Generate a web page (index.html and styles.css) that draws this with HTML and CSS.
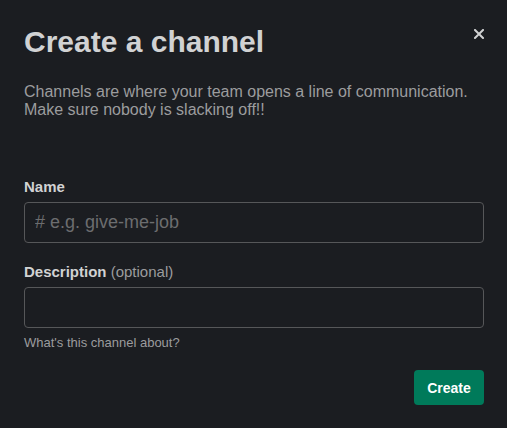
FILE: index.html
```html
<!DOCTYPE html>
<html lang="en">
<head>
<meta charset="utf-8">
<title>Create a channel</title>
<link rel="stylesheet" href="styles.css">
</head>
<body>
<div class="modal">
  <div class="header">
    <h1 class="title">Create a channel</h1>
    <button class="close" aria-label="Close">
      <svg width="10" height="10" viewBox="0 0 10 10"><path d="M1 1L9 9M9 1L1 9" stroke="#d1d2d3" stroke-width="2" stroke-linecap="square"/></svg>
    </button>
  </div>
  <p class="intro">Channels are where your team opens a line of communication.<br>Make sure nobody is slacking off!!</p>
  <form class="form">
    <label class="label" for="name">Name</label>
    <input class="field" id="name" type="text" placeholder="# e.g. give-me-job">
    <label class="label label-desc" for="desc">Description <span class="optional">(optional)</span></label>
    <input class="field" id="desc" type="text">
    <div class="hint">What's this channel about?</div>
    <div class="actions">
      <button class="create" type="button">Create</button>
    </div>
  </form>
</div>
</body>
</html>
```

FILE: styles.css
```css
html, body {
  margin: 0;
  background: #1b1d21;
}
body {
  font-family: "Liberation Sans", Arial, sans-serif;
  color: #d1d2d3;
}
.modal {
  padding: 24px 23px 0 24px;
}
.header {
  display: flex;
  justify-content: space-between;
  align-items: flex-start;
}
.title {
  margin: 0;
  font-size: 30px;
  line-height: 36px;
  font-weight: 700;
  color: #d1d2d3;
}
.close {
  margin-top: 5px;
  padding: 0;
  border: 0;
  background: none;
  width: 10px;
  height: 10px;
  display: flex;
}
.intro {
  margin: 23px 0 0;
  font-size: 16px;
  line-height: 18px;
  color: #9b9c9e;
}
.form {
  display: flex;
  flex-direction: column;
  margin-top: 58px;
}
.label {
  font-size: 15px;
  line-height: 20px;
  font-weight: 700;
  color: #d1d2d3;
  margin-bottom: 5px;
}
.label-desc {
  margin-top: 19px;
}
.optional {
  font-weight: 400;
  color: #9b9c9e;
}
.field {
  box-sizing: border-box;
  height: 41px;
  width: 100%;
  margin: 0;
  padding: 0 10px;
  border: 1px solid #565759;
  border-radius: 4px;
  background: transparent;
  color: #d1d2d3;
  font-family: "Liberation Sans", Arial, sans-serif;
  font-size: 18px;
  outline: none;
}
.field::placeholder {
  color: #6c6d6f;
}
.hint {
  margin-top: 7px;
  font-size: 13px;
  line-height: 16px;
  color: #9b9c9e;
}
.actions {
  display: flex;
  justify-content: flex-end;
  margin-top: 19px;
}
.create {
  height: 35px;
  width: 70px;
  padding: 0;
  border: 0;
  border-radius: 4px;
  background: #007a5a;
  color: #ffffff;
  font-family: "Liberation Sans", Arial, sans-serif;
  font-size: 14px;
  font-weight: 700;
}
```
